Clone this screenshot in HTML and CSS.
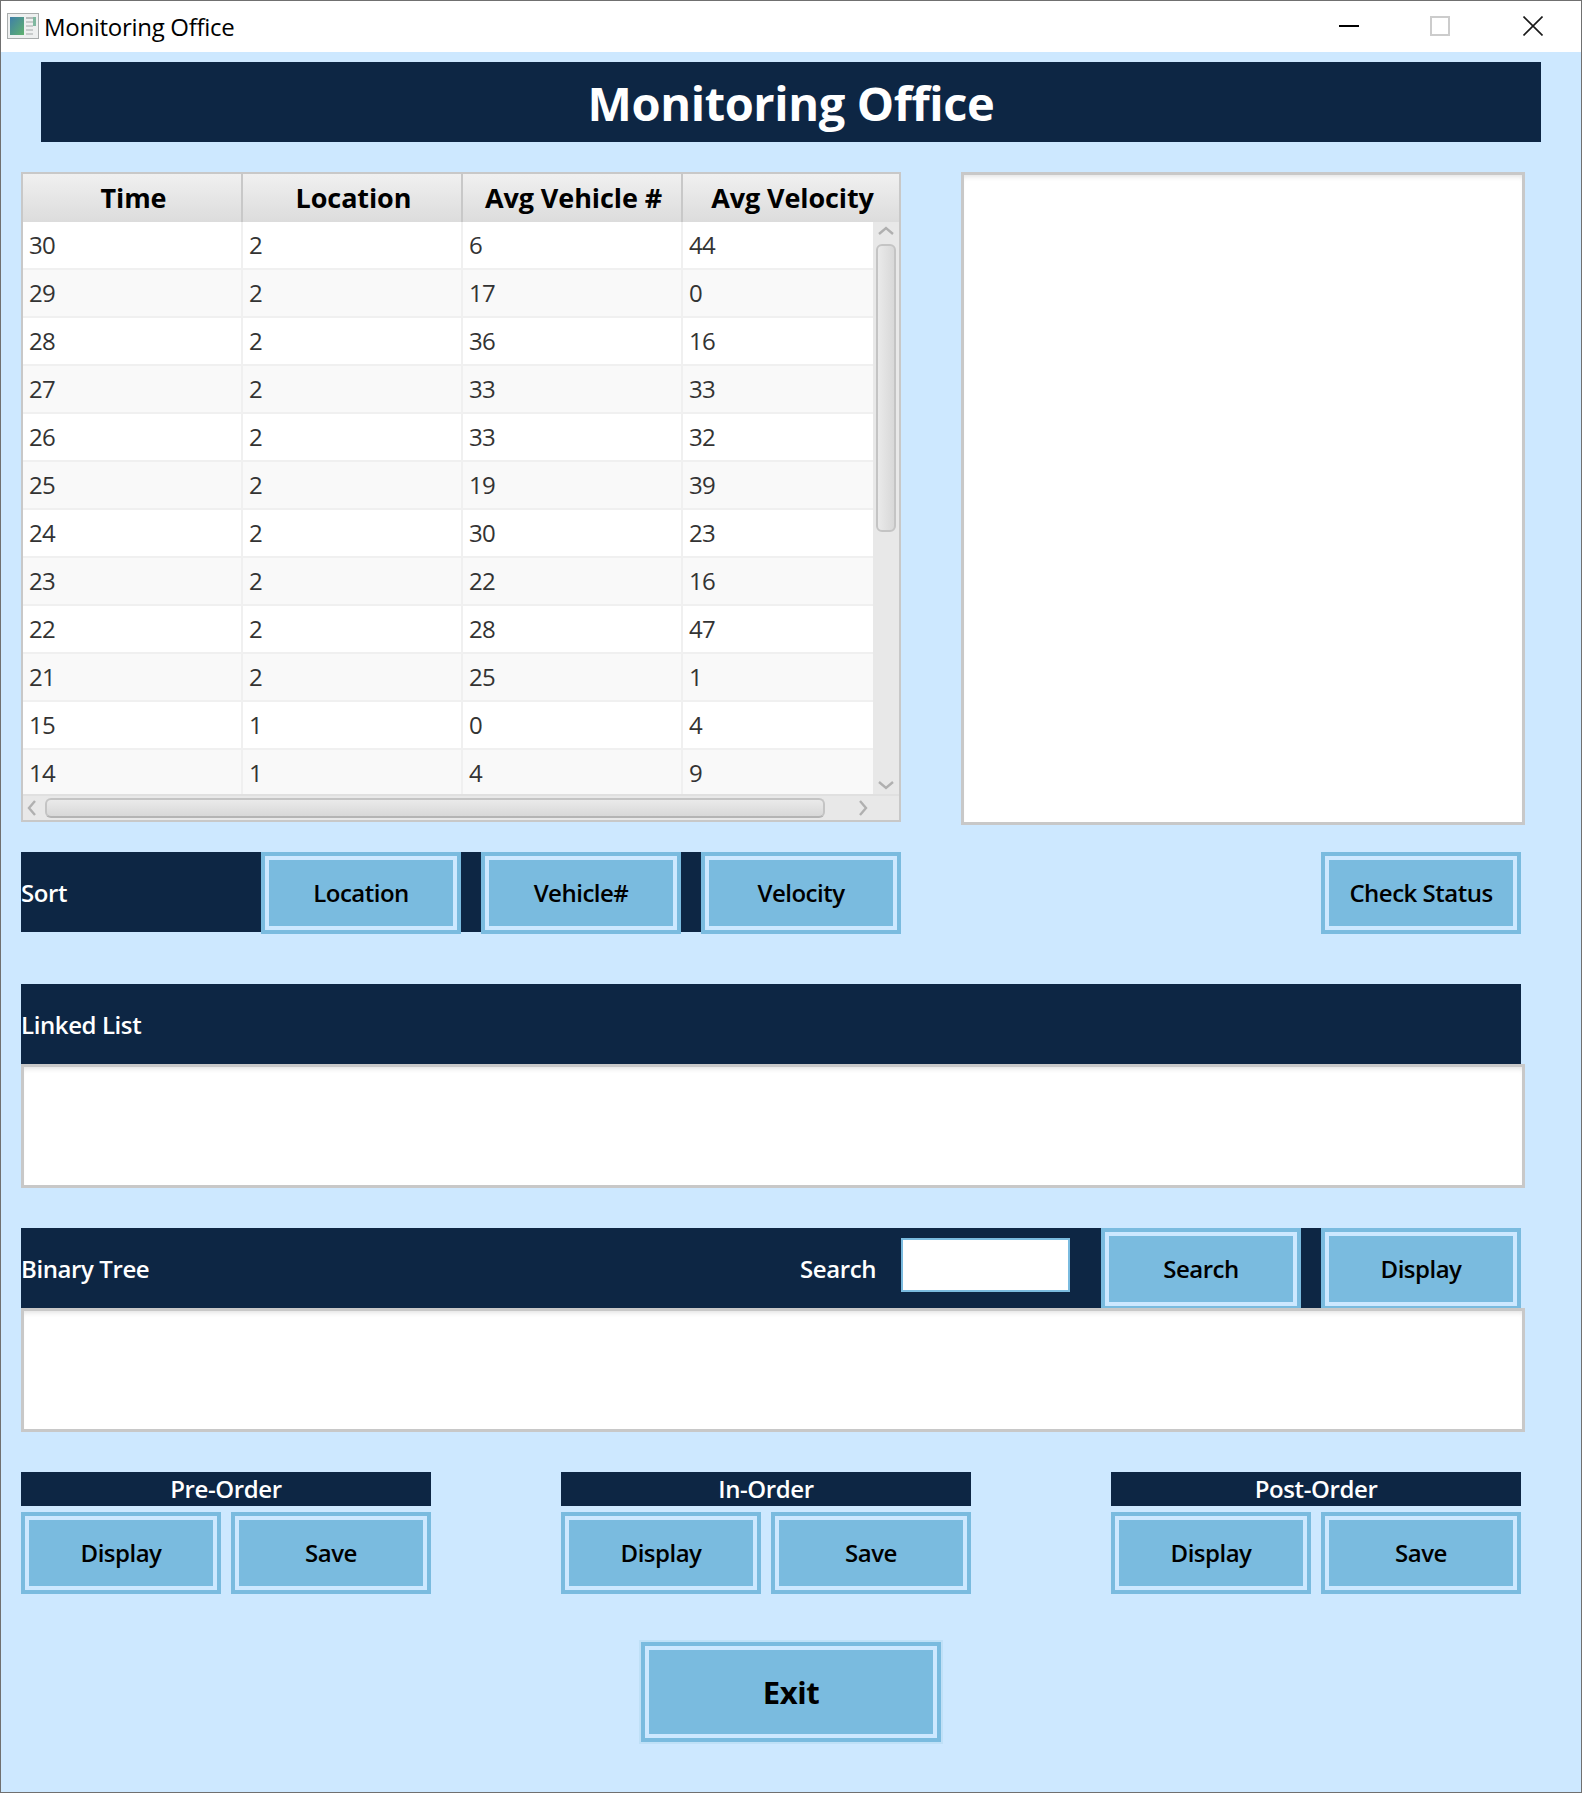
FILE: index.html
```html
<!DOCTYPE html>
<html lang="en">
<head>
    <meta charset="UTF-8">
    <meta name="viewport" content="width=device-width, initial-scale=1.0">
    <title>Monitoring Office</title>
    <link rel="stylesheet" href="styles.css">
</head>
<body>
<div class="window">

    <div class="titlebar">
        <svg class="app-icon" width="32" height="26" viewBox="0 0 32 26">
            <defs>
                <linearGradient id="screen" x1="0" y1="0" x2="1" y2="1">
                    <stop offset="0" stop-color="#3f7fa8"/>
                    <stop offset="1" stop-color="#5fb26e"/>
                </linearGradient>
            </defs>
            <rect x="0.5" y="0.5" width="31" height="25" fill="#eef0f0" stroke="#a9adad"/>
            <rect x="3" y="4" width="14" height="18" fill="url(#screen)"/>
            <rect x="19" y="4" width="7" height="2" fill="#b8bcbc"/>
            <rect x="19" y="8" width="7" height="2" fill="#c8cccc"/>
            <rect x="19" y="12" width="7" height="2" fill="#c8cccc"/>
            <rect x="19" y="16" width="7" height="2" fill="#c8cccc"/>
            <rect x="19" y="20" width="7" height="2" fill="#c8cccc"/>
            <rect x="26" y="4" width="3" height="9" fill="#7fb8a0"/>
        </svg>
        <span class="window-title">Monitoring Office</span>
        <div class="window-controls">
            <svg class="ctl-min" width="20" height="20" viewBox="0 0 20 20"><path d="M0 10h20" stroke="#000" stroke-width="2"/></svg>
            <svg class="ctl-max" width="20" height="20" viewBox="0 0 20 20"><rect x="1" y="1" width="18" height="18" fill="none" stroke="#ccc" stroke-width="2"/></svg>
            <svg class="ctl-close" width="20" height="20" viewBox="0 0 20 20"><path d="M0.5 0.5l19 19M19.5 0.5l-19 19" stroke="#1a1a1a" stroke-width="1.6"/></svg>
        </div>
    </div>

    <div class="content">
        <h1 class="app-heading">Monitoring Office</h1>

        <div class="top-row">
            <div class="table">
                <div class="table-head">
                    <div class="th">Time</div>
                    <div class="th">Location</div>
                    <div class="th">Avg Vehicle #</div>
                    <div class="th">Avg Velocity</div>
                </div>
                <div class="table-middle">
                    <div class="table-rows">
                        <div class="tr"><div class="td">30</div><div class="td">2</div><div class="td">6</div><div class="td">44</div></div>
                        <div class="tr"><div class="td">29</div><div class="td">2</div><div class="td">17</div><div class="td">0</div></div>
                        <div class="tr"><div class="td">28</div><div class="td">2</div><div class="td">36</div><div class="td">16</div></div>
                        <div class="tr"><div class="td">27</div><div class="td">2</div><div class="td">33</div><div class="td">33</div></div>
                        <div class="tr"><div class="td">26</div><div class="td">2</div><div class="td">33</div><div class="td">32</div></div>
                        <div class="tr"><div class="td">25</div><div class="td">2</div><div class="td">19</div><div class="td">39</div></div>
                        <div class="tr"><div class="td">24</div><div class="td">2</div><div class="td">30</div><div class="td">23</div></div>
                        <div class="tr"><div class="td">23</div><div class="td">2</div><div class="td">22</div><div class="td">16</div></div>
                        <div class="tr"><div class="td">22</div><div class="td">2</div><div class="td">28</div><div class="td">47</div></div>
                        <div class="tr"><div class="td">21</div><div class="td">2</div><div class="td">25</div><div class="td">1</div></div>
                        <div class="tr"><div class="td">15</div><div class="td">1</div><div class="td">0</div><div class="td">4</div></div>
                        <div class="tr"><div class="td">14</div><div class="td">1</div><div class="td">4</div><div class="td">9</div></div>
                    </div>
                    <div class="vscroll">
                        <svg class="arrow" width="18" height="10" viewBox="0 0 18 10"><path d="M2 8l7-6 7 6" fill="none" stroke="#b0b0b0" stroke-width="2.4"/></svg>
                        <div class="vthumb"></div>
                        <svg class="arrow arrow-end" width="18" height="10" viewBox="0 0 18 10"><path d="M2 2l7 6 7-6" fill="none" stroke="#b0b0b0" stroke-width="2.4"/></svg>
                    </div>
                </div>
                <div class="hscroll">
                    <svg class="arrow" width="10" height="18" viewBox="0 0 10 18"><path d="M8 2l-6 7 6 7" fill="none" stroke="#b0b0b0" stroke-width="2.4"/></svg>
                    <div class="hthumb"></div>
                    <svg class="arrow" width="10" height="18" viewBox="0 0 10 18"><path d="M2 2l6 7-6 7" fill="none" stroke="#b0b0b0" stroke-width="2.4"/></svg>
                </div>
            </div>
            <div class="textarea status-area"></div>
        </div>

        <div class="sort-row">
            <div class="bar sort-bar">
                <span class="bar-label">Sort</span>
                <button class="btn">Location</button>
                <button class="btn">Vehicle#</button>
                <button class="btn">Velocity</button>
            </div>
            <button class="btn check-btn">Check Status</button>
        </div>

        <div class="bar list-bar"><span class="bar-label">Linked List</span></div>
        <div class="textarea wide-area"></div>

        <div class="bar tree-bar">
            <span class="bar-label">Binary Tree</span>
            <span class="bar-label search-label">Search</span>
            <input class="search-input" type="text">
            <button class="btn">Search</button>
            <button class="btn">Display</button>
        </div>
        <div class="textarea wide-area"></div>

        <div class="orders">
            <div class="order">
                <div class="order-title">Pre-Order</div>
                <div class="order-buttons"><button class="btn">Display</button><button class="btn">Save</button></div>
            </div>
            <div class="order">
                <div class="order-title">In-Order</div>
                <div class="order-buttons"><button class="btn">Display</button><button class="btn">Save</button></div>
            </div>
            <div class="order">
                <div class="order-title">Post-Order</div>
                <div class="order-buttons"><button class="btn">Display</button><button class="btn">Save</button></div>
            </div>
        </div>

        <button class="btn exit-btn">Exit</button>
    </div>
</div>
</body>
</html>
```

FILE: styles.css
```css
* {
    margin: 0;
    padding: 0;
    box-sizing: border-box;
    font-family: "Open Sans", "Noto Sans", sans-serif;
}

body {
    background: #cde8ff;
}

.window {
    width: 1582px;
    height: 1793px;
    border: 1px solid #707070;
    background: #cde8ff;
    display: flex;
    flex-direction: column;
    overflow: hidden;
}

/* title bar */
.titlebar {
    height: 51px;
    flex: none;
    background: #fff;
    display: flex;
    align-items: center;
    padding-left: 6px;
}

.app-icon {
    flex: none;
    margin-top: -1px;
}

.window-title {
    margin-left: 5px;
    font-size: 24px;
    letter-spacing: -0.3px;
    color: #000;
}

.window-controls {
    margin-left: auto;
    display: flex;
    margin-right: 38px;
    margin-top: -2px;
}

.ctl-min { margin-right: 71px; }
.ctl-max { margin-right: 73px; }

/* main area */
.content {
    flex: 1;
    padding: 10px 0 0 20px;
    display: flex;
    flex-direction: column;
}

.app-heading {
    width: 1500px;
    height: 80px;
    margin-left: 20px;
    background: #0d2644;
    color: #fff;
    font-size: 47px;
    font-weight: 700;
    text-align: center;
    line-height: 82px;
    letter-spacing: -0.4px;
}

.top-row {
    display: flex;
    margin-top: 30px;
}

/* table */
.table {
    width: 880px;
    height: 650px;
    border: 2px solid #c8c8c8;
    display: flex;
    flex-direction: column;
    background: #fff;
}

.table-head {
    display: grid;
    grid-template-columns: 220px 220px 220px 1fr;
    height: 48px;
    flex: none;
    border-bottom: 2px solid #c8c8c8;
}

.th {
    background: linear-gradient(to bottom, #f0f0f0, #dcdcdc);
    border-right: 2px solid #c8c8c8;
    font-size: 27px;
    font-weight: 700;
    color: #000;
    text-align: center;
    line-height: 48px;
    letter-spacing: -0.1px;
    padding-left: 3px;
}

.th:last-child {
    border-right: none;
}

.table-middle {
    flex: 1;
    display: flex;
    min-height: 0;
}

.table-rows {
    flex: 1;
    overflow: hidden;
}

.tr {
    display: grid;
    grid-template-columns: 220px 220px 220px 1fr;
    height: 48px;
    background: #fff;
    border-bottom: 2px solid #f0f0f0;
}

.tr:nth-child(even) {
    background: #f9f9f9;
}

.td {
    border-right: 2px solid #f0f0f0;
    padding-left: 6px;
    font-size: 24px;
    line-height: 46px;
    color: #333;
    letter-spacing: -0.6px;
}

.td:last-child {
    border-right: none;
}

.vscroll {
    width: 26px;
    flex: none;
    background: #e8e8e8;
    display: flex;
    flex-direction: column;
    align-items: center;
    padding-top: 4px;
    padding-bottom: 4px;
}

.vthumb {
    width: 20px;
    height: 288px;
    margin-top: 8px;
    border: 2px solid #c4c4c4;
    border-radius: 6px;
    background: linear-gradient(to right, #eaeaea, #d8d8d8);
}

.arrow {
    flex: none;
}

.arrow-end {
    margin-top: auto;
}

.hscroll {
    height: 26px;
    flex: none;
    background: #e8e8e8;
    border-top: 2px solid #e0e0e0;
    display: flex;
    align-items: center;
    padding: 0 31px 0 4px;
}

.hthumb {
    width: 780px;
    height: 20px;
    margin: 0 auto 0 8px;
    border: 2px solid #c4c4c4;
    border-bottom-color: #b4b4b4;
    border-radius: 6px;
    background: linear-gradient(to bottom, #eaeaea, #d8d8d8);
}

/* text areas */
.textarea {
    background: #fff;
    border: 3px solid #c8c8c8;
    box-shadow: inset 0 5px 5px -3px #e4e4e4;
}

.status-area {
    width: 564px;
    height: 653px;
    margin-left: 60px;
}

.wide-area {
    width: 1504px;
    height: 124px;
    flex: none;
}

/* dark bars */
.bar {
    background: #0d2644;
    height: 80px;
    display: flex;
    align-items: flex-start;
}

.bar-label {
    color: #fff;
    font-size: 24px;
    font-weight: 600;
    line-height: 82px;
    letter-spacing: -0.4px;
}

.btn {
    flex: none;
    width: 200px;
    height: 82px;
    padding-bottom: 2px;
    background: #7abbdf;
    border: 4px solid #7abbdf;
    outline: 4px solid #cde8ff;
    outline-offset: -8px;
    color: #000;
    font-size: 24px;
    font-weight: 600;
    letter-spacing: -0.5px;
}

.sort-row {
    display: flex;
    justify-content: space-between;
    width: 1500px;
    margin-top: 27px;
}

.sort-bar {
    width: 680px;
}

.sort-bar .bar-label {
    width: 240px;
    flex: none;
}

.sort-bar .btn + .btn {
    margin-left: 20px;
}

.list-bar {
    width: 1500px;
    margin-top: 50px;
    flex: none;
}

.tree-bar {
    width: 1500px;
    margin-top: 40px;
    flex: none;
}

.search-label {
    margin-left: auto;
}

.search-input {
    width: 169px;
    height: 54px;
    margin: 10px 31px 0 25px;
    background: #fff;
    border: 2px solid #7abbdf;
    outline: none;
}

.tree-bar .btn + .btn {
    margin-left: 20px;
}

/* traversal groups */
.orders {
    display: flex;
    gap: 130px;
    width: 1500px;
    margin-top: 40px;
}

.order {
    width: 410px;
}

.order:last-child {
    margin-left: 10px;
}

.order-title {
    height: 34px;
    background: #0d2644;
    color: #fff;
    font-size: 24px;
    font-weight: 600;
    text-align: center;
    line-height: 33px;
    letter-spacing: -0.4px;
}

.order-buttons {
    display: flex;
    justify-content: space-between;
    margin-top: 6px;
}

.exit-btn {
    width: 300px;
    height: 100px;
    padding-bottom: 0;
    margin: 48px 0 0 620px;
    font-size: 31px;
    font-weight: 700;
    letter-spacing: -0.4px;
    box-shadow: 0 0 0 2px #bfe0f7;
}
```
